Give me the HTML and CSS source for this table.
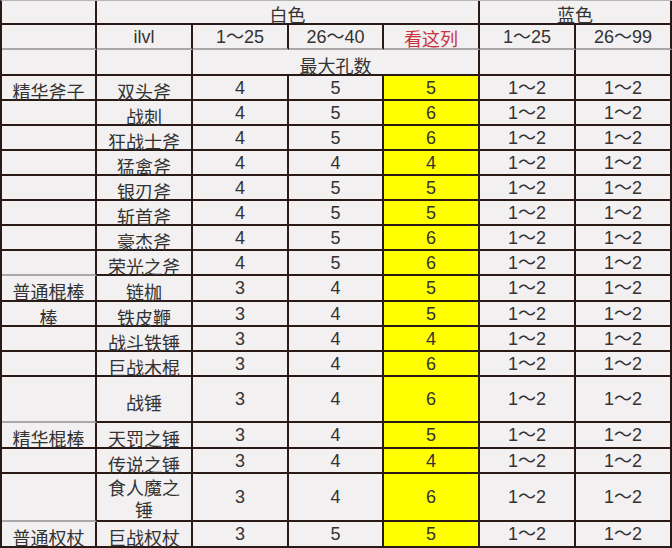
FILE: index.html
```html
<!DOCTYPE html>
<html lang="zh">
<head>
<meta charset="utf-8">
<link rel="stylesheet" href="styles.css">
</head>
<body>
<div class="sheet">
  <div class="c"></div>
  <div class="c s4">白色</div>
  <div class="c s2">蓝色</div>

  <div class="c g"></div>
  <div class="c g">ilvl</div>
  <div class="c g">1～25</div>
  <div class="c g">26～40</div>
  <div class="c g red">看这列</div>
  <div class="c g">1～25</div>
  <div class="c g">26～99</div>

  <div class="c"></div>
  <div class="c"></div>
  <div class="c s3">最大孔数</div>
  <div class="c"></div>
  <div class="c"></div>

  <div class="c cjk">精华斧子</div><div class="c cjk">双头斧</div><div class="c">4</div><div class="c">5</div><div class="c y">5</div><div class="c">1～2</div><div class="c">1～2</div>
  <div class="c"></div><div class="c cjk">战刺</div><div class="c">4</div><div class="c">5</div><div class="c y">6</div><div class="c">1～2</div><div class="c">1～2</div>
  <div class="c"></div><div class="c cjk">狂战士斧</div><div class="c">4</div><div class="c">5</div><div class="c y">6</div><div class="c">1～2</div><div class="c">1～2</div>
  <div class="c"></div><div class="c cjk">猛禽斧</div><div class="c">4</div><div class="c">4</div><div class="c y">4</div><div class="c">1～2</div><div class="c">1～2</div>
  <div class="c"></div><div class="c cjk">银刃斧</div><div class="c">4</div><div class="c">5</div><div class="c y">5</div><div class="c">1～2</div><div class="c">1～2</div>
  <div class="c"></div><div class="c cjk">斩首斧</div><div class="c">4</div><div class="c">5</div><div class="c y">5</div><div class="c">1～2</div><div class="c">1～2</div>
  <div class="c"></div><div class="c cjk">豪杰斧</div><div class="c">4</div><div class="c">5</div><div class="c y">6</div><div class="c">1～2</div><div class="c">1～2</div>
  <div class="c g"></div><div class="c cjk">荣光之斧</div><div class="c">4</div><div class="c">5</div><div class="c y">6</div><div class="c">1～2</div><div class="c">1～2</div>

  <div class="c cjk">普通棍棒</div><div class="c cjk">链枷</div><div class="c">3</div><div class="c">4</div><div class="c y">5</div><div class="c">1～2</div><div class="c">1～2</div>
  <div class="c cjk">棒</div><div class="c cjk">铁皮鞭</div><div class="c">3</div><div class="c">4</div><div class="c y">5</div><div class="c">1～2</div><div class="c">1～2</div>
  <div class="c"></div><div class="c cjk">战斗铁锤</div><div class="c">3</div><div class="c">4</div><div class="c y">4</div><div class="c">1～2</div><div class="c">1～2</div>
  <div class="c"></div><div class="c cjk">巨战木棍</div><div class="c">3</div><div class="c">4</div><div class="c y">6</div><div class="c">1～2</div><div class="c">1～2</div>
  <div class="c g"></div><div class="c cjk">战锤</div><div class="c">3</div><div class="c">4</div><div class="c y">6</div><div class="c">1～2</div><div class="c">1～2</div>

  <div class="c cjk">精华棍棒</div><div class="c cjk">天罚之锤</div><div class="c">3</div><div class="c">4</div><div class="c y">5</div><div class="c">1～2</div><div class="c">1～2</div>
  <div class="c"></div><div class="c cjk">传说之锤</div><div class="c">3</div><div class="c">4</div><div class="c y">4</div><div class="c">1～2</div><div class="c">1～2</div>
  <div class="c g"></div><div class="c cjk wrap">食人魔之锤</div><div class="c">3</div><div class="c">4</div><div class="c y">6</div><div class="c">1～2</div><div class="c">1～2</div>

  <div class="c cjk">普通权杖</div><div class="c cjk">巨战权杖</div><div class="c">3</div><div class="c">5</div><div class="c y">5</div><div class="c">1～2</div><div class="c">1～2</div>
</div>
</body>
</html>
```

FILE: styles.css
```css
html, body {
  margin: 0;
  padding: 0;
  background: #f2f0f1;
}

.sheet {
  width: 672px;
  box-sizing: border-box;
  border-left: 2px solid #2a1a16;
  border-top: 1px solid #b8b4b4;
  display: grid;
  grid-template-columns: 95px 96px 96px 95px 96px 96px 96px;
  grid-template-rows:
    24px 25px 26px
    25px 25px 25px 25px 25px 25px 25px 25px
    26px 25px 25px 25px 46px
    26px 25px 48px
    26px;
  font-family: "Liberation Sans", "Noto Sans CJK SC", sans-serif;
  font-size: 18px;
  color: #333;
  overflow: hidden;
  height: 548px;
}

.c {
  box-sizing: border-box;
  border-right: 2px solid #2a1a16;
  border-bottom: 2px solid #2a1a16;
  background: #f2f0f1;
  display: flex;
  align-items: center;
  justify-content: center;
  text-align: center;
  line-height: 22px;
  padding: 0 4px;
  white-space: nowrap;
}

.cjk {
  font-family: "Noto Sans CJK SC", sans-serif;
  padding-top: 6px;
}

.wrap {
  white-space: normal;
  padding-top: 2px;
}

.s4 { grid-column: span 4; font-family: "Noto Sans CJK SC", sans-serif; padding-top: 4px; }
.s3 { grid-column: span 3; font-family: "Noto Sans CJK SC", sans-serif; padding-top: 5px; }
.s2 { grid-column: span 2; font-family: "Noto Sans CJK SC", sans-serif; padding-top: 4px; }

.g { border-bottom-color: #a9a7a7; }

.y { background: #ffff00; }

.red {
  color: #c8323c;
  font-family: "Noto Sans CJK SC", sans-serif;
  padding-top: 2px;
}
```
